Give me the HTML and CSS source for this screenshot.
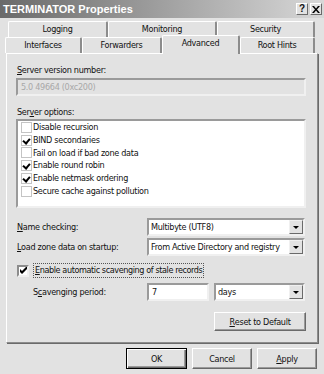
FILE: index.html
```html
<!DOCTYPE html>
<html>
<head>
<meta charset="utf-8">
<link rel="stylesheet" href="styles.css">
</head>
<body>
<div class="win">
  <div class="titlebar">
    <span class="title">TERMINATOR Properties</span>
    <div class="tb-btns">
      <span class="tbb">?</span>
      <span class="tbb tbx"><svg width="8" height="7" viewBox="0 0 8 7"><path d="M0 0h2l2 2.5L6 0h2L5 3.5 8 7H6L4 4.5 2 7H0l3-3.5z" fill="#000"/></svg></span>
    </div>
  </div>
  <div class="tabs">
    <div class="tabrow back">
      <div class="tab t-log">Logging</div>
      <div class="tab t-mon">Monitoring</div>
      <div class="tab t-sec">Security</div>
    </div>
    <div class="tabrow front">
      <div class="tab t-int">Interfaces</div>
      <div class="tab t-fwd">Forwarders</div>
      <div class="tab t-adv sel">Advanced</div>
      <div class="tab t-rh">Root Hints</div>
    </div>
  </div>
  <div class="panel">
    <div class="lbl"><u>S</u>erver version number:</div>
    <div class="field disabled">5.0 49664 (0xc200)</div>
    <div class="lbl gap10">Ser<u>v</u>er options:</div>
    <div class="listbox">
      <div class="li"><span class="fcb"></span>Disable recursion</div>
      <div class="li"><span class="fcb on"></span>BIND secondaries</div>
      <div class="li"><span class="fcb"></span>Fail on load if bad zone data</div>
      <div class="li"><span class="fcb on"></span>Enable round robin</div>
      <div class="li"><span class="fcb on"></span>Enable netmask ordering</div>
      <div class="li"><span class="fcb"></span>Secure cache against pollution</div>
    </div>
    <div class="grid">
      <div class="glbl"><u>N</u>ame checking:</div>
      <div class="combo"><span class="cval">Multibyte (UTF8)</span><span class="dd"><span class="tri"></span></span></div>
      <div class="glbl"><u>L</u>oad zone data on startup:</div>
      <div class="combo"><span class="cval">From Active Directory and registry</span><span class="dd"><span class="tri"></span></span></div>
    </div>
    <div class="chkrow">
      <span class="cb3d"><svg width="7" height="7" viewBox="0 0 7 7"><path d="M0 2v3l2 2 5-5V-1L2 4z" fill="#000"/></svg></span>
      <span class="focus"><u>E</u>nable automatic scavenging of stale records</span>
    </div>
    <div class="scavrow">
      <div class="slbl">S<u>c</u>avenging period:</div>
      <div class="field white num">7</div>
      <div class="combo days"><span class="cval">days</span><span class="dd"><span class="tri"></span></span></div>
    </div>
    <div class="resetrow">
      <div class="btn reset"><u>R</u>eset to Default</div>
    </div>
  </div>
  <div class="btnrow">
    <div class="btn def">OK</div>
    <div class="btn">Cancel</div>
    <div class="btn"><u>A</u>pply</div>
  </div>
</div>
</body>
</html>
```

FILE: styles.css
```css
* { box-sizing: border-box; }
html, body { margin: 0; padding: 0; }
body {
  width: 324px; height: 374px; overflow: hidden;
  background: #e2e2e2;
  font-family: "DejaVu Sans Condensed", "DejaVu Sans", sans-serif;
  font-size: 9px; letter-spacing: -0.3px; color: #111;
}
u { text-decoration: underline; text-underline-offset: 1px; }
.win { width: 324px; height: 374px; position: relative; }
.titlebar {
  height: 18px;
  background: linear-gradient(to right, #6a6a6a 0%, #9a9a9a 45%, #d8d8d8 100%);
  display: flex; align-items: center; justify-content: space-between;
  padding: 0 2px 0 3px;
}
.title { color: #fff; font-weight: bold; font-size: 11px; letter-spacing: 0; font-family: "Liberation Sans", Arial, sans-serif; }
.tb-btns { display: flex; gap: 2px; }
.tbb {
  width: 12px; height: 12px; background: #e2e2e2;
  border: 1px solid; border-color: #fff #6a6a6a #6a6a6a #fff;
  font-weight: bold; font-size: 10px; line-height: 10px; text-align: center; letter-spacing: 0;
  font-family: "Liberation Sans", Arial, sans-serif;
  display: flex; align-items: center; justify-content: center;
}
.tabs { height: 35px; padding-top: 3px; position: relative; }
.tabrow { display: flex; height: 16px; }
.tabrow.back { padding-left: 8px; }
.tabrow.front { padding-left: 5px; }
.tab {
  height: 16px; text-align: center; line-height: 15px;
  border-top: 1px solid #fff; border-left: 1px solid #fff;
  border-right: 2px solid #8c8c8c;
  border-top-left-radius: 2px; border-top-right-radius: 2px;
}
.t-log { width: 100px; }
.t-mon { width: 109px; }
.t-sec { width: 98px; }
.t-int { width: 77px; }
.t-fwd { width: 80px; }
.t-adv { width: 78px; }
.t-rh { width: 75px; }
.tab.sel {
  height: 19px; margin-top: -2px; line-height: 14px; position: relative; z-index: 2;
  background: #e2e2e2; border-right-color: #8c8c8c;
}
.panel {
  margin: 0 6px 0 6px; width: 312px; height: 290px;
  border: 1px solid; border-color: #fff #8c8c8c #8c8c8c #fff;
  box-shadow: 1px 1px 0 #6a6a6a;
  padding: 10px 11px 0 9px;
  position: relative; z-index: 1;
}
.lbl { height: 13px; line-height: 13px; padding-left: 1px; }
.gap10 { margin-top: 10px; }
.field {
  height: 18px; margin-top: 1px; line-height: 14px; padding-left: 3px;
  border: 2px solid; border-color: #9a9a9a #f0f0f0 #f0f0f0 #9a9a9a;
}
.field.disabled { color: #a8a8a8; background: #e2e2e2; }
.field.white { background: #fff; }
.listbox {
  height: 89px; background: #fff; padding: 0 0 0 3px;
  border: 2px solid; border-color: #9a9a9a #f0f0f0 #f0f0f0 #9a9a9a;
}
.li { height: 12.8px; line-height: 13px; display: flex; align-items: center; }
.fcb {
  width: 11px; height: 11px; border: 1px solid #c4c4c4; margin-right: 1px; background: #fff;
  position: relative; flex: none;
}
.fcb.on::after {
  content: ""; position: absolute; left: 2px; top: 1px; width: 3px; height: 5px;
  border: solid #000; border-width: 0 2px 2px 0; transform: rotate(40deg);
}
.grid {
  display: grid; grid-template-columns: 131px 158px; row-gap: 2px; margin-top: 10px;
  align-items: center;
}
.glbl { padding-left: 1px; white-space: nowrap; }
.combo {
  height: 18px; background: #fff; display: flex; align-items: center; justify-content: space-between;
  border: 2px solid; border-color: #9a9a9a #f0f0f0 #f0f0f0 #9a9a9a;
}
.cval { padding-left: 2px; white-space: nowrap; }
.dd {
  width: 14px; height: 14px; background: #e2e2e2; flex: none;
  border: 1px solid; border-color: #f0f0f0 #6a6a6a #6a6a6a #f0f0f0;
  display: flex; align-items: center; justify-content: center;
}
.tri { width: 0; height: 0; border-left: 3px solid transparent; border-right: 3px solid transparent; border-top: 3px solid #000; }
.chkrow { display: flex; align-items: center; margin-top: 7px; height: 15px; padding-left: 1px; }
.cb3d {
  width: 12px; height: 12px; background: #fff; margin-right: 4px;
  border: 2px solid; border-color: #8c8c8c #f0f0f0 #f0f0f0 #8c8c8c;
  display: flex; align-items: center; justify-content: center;
}
.focus { border: 1px dotted #555; padding: 0 1px; line-height: 13px; font-size: 9px; letter-spacing: -0.4px; white-space: nowrap; }
.scavrow { display: flex; align-items: center; margin-top: 5px; }
.slbl { width: 131px; padding-left: 17px; }
.field.num { width: 62px; margin-top: 0; }
.combo.days { width: 91px; margin-left: 5px; }
.resetrow { display: flex; justify-content: flex-end; margin-top: 11px; padding-right: 0; }
.btn {
  height: 19px; display: flex; align-items: center; justify-content: center;
  background: #e2e2e2; border: 1px solid; border-color: #fff #6a6a6a #6a6a6a #fff;
  box-shadow: inset -1px -1px 0 #9a9a9a;
}
.btn.reset { width: 92px; }
.btnrow { display: flex; justify-content: flex-end; gap: 5px; padding: 5px 7px 0 0; }
.btnrow .btn { width: 60px; height: 21px; }
.btn.def { width: 61px; border: 1px solid #000; box-shadow: inset 1px 1px 0 #fff, inset -1px -1px 0 #6a6a6a, inset -2px -2px 0 #9a9a9a; }
```
